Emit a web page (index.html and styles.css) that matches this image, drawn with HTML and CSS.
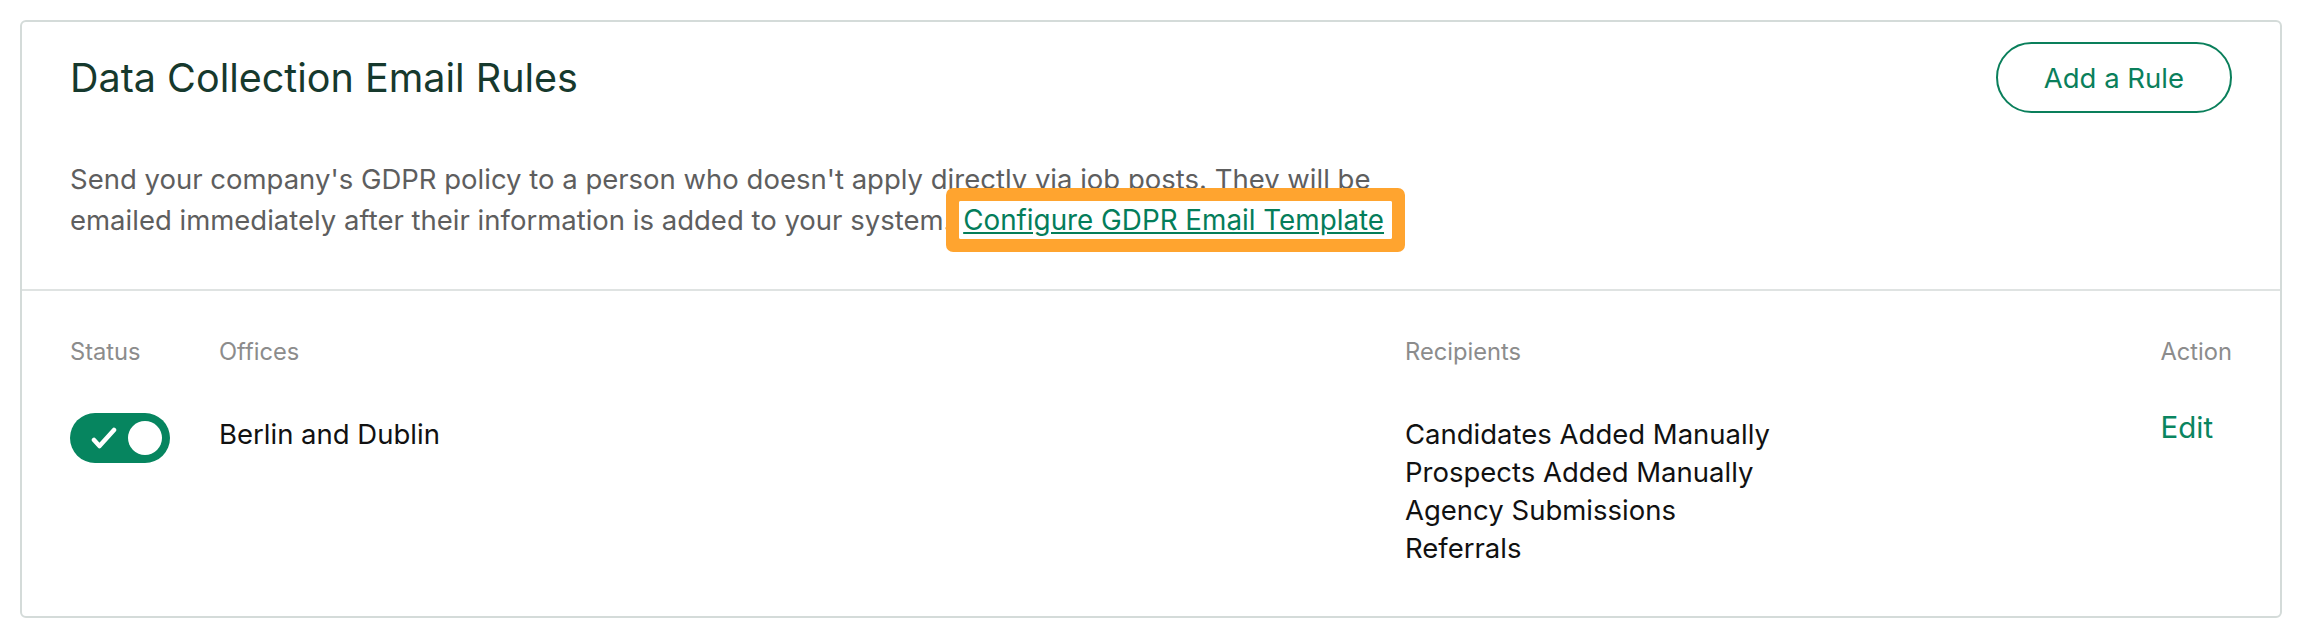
FILE: index.html
```html
<!DOCTYPE html>
<html lang="en">
<head>
  <meta charset="UTF-8">
  <meta name="viewport" content="width=device-width, initial-scale=1.0">
  <title>Data Collection Email Rules</title>
  <link rel="stylesheet" href="styles.css">
</head>
<body>
  <div class="card">
    <div class="card-head">
      <div class="head-row">
        <h2 class="title">Data Collection Email Rules</h2>
        <button class="btn-outline">Add a Rule</button>
      </div>
      <p class="desc">Send your company's GDPR policy to a person who doesn't apply directly via job posts. They will be emailed immediately after their information is added to your system. <a href="#" class="gdpr-link">Configure GDPR Email Template</a></p>
    </div>
    <div class="rules">
      <div class="col-head">Status</div>
      <div class="col-head">Offices</div>
      <div class="col-head">Recipients</div>
      <div class="col-head">Action</div>

      <div class="cell">
        <span class="toggle">
          <svg width="28" height="24" viewBox="0 0 28 24"><path d="M5 14 L10.5 20 L25 4" fill="none" stroke="#fff" stroke-width="4.5" stroke-linecap="round" stroke-linejoin="round"/></svg>
          <span class="knob"></span>
        </span>
      </div>
      <div class="cell text">Berlin and Dublin</div>
      <div class="cell text">
        Candidates Added Manually<br>
        Prospects Added Manually<br>
        Agency Submissions<br>
        Referrals
      </div>
      <div class="cell"><a href="#" class="edit">Edit</a></div>
    </div>
  </div>
</body>
</html>
```

FILE: styles.css
```css
body {
  margin: 0;
  padding: 20px;
  font-family: Inter, "Liberation Sans", sans-serif;
  background: #fff;
}

.card {
  border: 2px solid #d4dbd9;
  border-radius: 6px;
  min-height: 593px;
}

.card-head {
  padding: 20px 48px 49px;
  border-bottom: 2px solid #dfe3e2;
}

.head-row {
  display: flex;
  justify-content: space-between;
  align-items: center;
}

.title {
  margin: 0;
  font-size: 39.5px;
  font-weight: 400;
  color: #16392d;
}

.btn-outline {
  height: 71px;
  padding: 0 46px;
  border: 2px solid #0a7f5b;
  border-radius: 36px;
  background: #fff;
  color: #0a7f5b;
  font-family: inherit;
  font-size: 27.5px;
  cursor: pointer;
}

.desc {
  margin: 46px 0 0;
  max-width: 1330px;
  font-size: 27.5px;
  line-height: 40.5px;
  color: #5e5e5e;
}

/* highlight around the template link */
.gdpr-link {
  position: relative;
  padding: 2px 8px 2px 4px;
  font-size: 27.8px;
  background: #fff;
  color: #047d5a;
  border-radius: 2px;
  box-shadow: 0 0 0 13px #ffa42f;
}

.rules {
  display: grid;
  grid-template-columns: 149px 1186px 1fr auto;
  padding: 43px 48px 49px;
  row-gap: 43px;
}

.col-head {
  font-size: 23.7px;
  line-height: 36px;
  color: #8c8c8c;
}

.cell {
  display: flex;
  align-items: flex-start;
}

.text {
  display: block;
  padding-top: 2px;
  font-size: 27.5px;
  line-height: 38px;
  color: #111;
}

.toggle {
  display: flex;
  align-items: center;
  gap: 11px;
  width: 100px;
  height: 50px;
  box-sizing: border-box;
  padding: 0 8px 0 19px;
  border-radius: 25px;
  background: #06855f;
}

.knob {
  width: 34px;
  height: 34px;
  border-radius: 50%;
  background: #fff;
}

.edit {
  margin-top: -5px;
  font-size: 29.5px;
  line-height: 38px;
  color: #0a8560;
  text-decoration: none;
}
```
